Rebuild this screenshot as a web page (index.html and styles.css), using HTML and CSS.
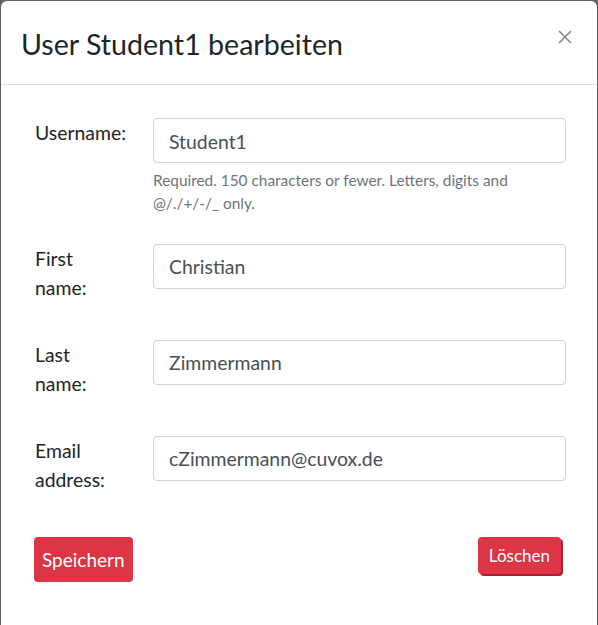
FILE: index.html
```html
<!DOCTYPE html>
<html lang="de">
<head>
<meta charset="utf-8">
<title>User Student1 bearbeiten</title>
<link rel="stylesheet" href="styles.css">
</head>
<body>
<div class="modal">
  <div class="modal-header">
    <h4 class="modal-title">User Student1 bearbeiten</h4>
    <button class="close" type="button" aria-label="Close">
      <svg width="14" height="14" viewBox="0 0 14 14"><path d="M1 1 L13 13 M13 1 L1 13" stroke="#8a8a8a" stroke-width="1.7" fill="none"/></svg>
    </button>
  </div>
  <form class="modal-body">
    <div class="row row-first">
      <label class="lbl lbl-nowrap">Username:</label>
      <div class="field">
        <input class="input" type="text" value="Student1">
        <div class="help">Required. 150 characters or fewer. Letters, digits and @/./+/-/_ only.</div>
      </div>
    </div>
    <div class="row">
      <label class="lbl">First name:</label>
      <div class="field"><input class="input" type="text" value="Christian"></div>
    </div>
    <div class="row">
      <label class="lbl">Last name:</label>
      <div class="field"><input class="input" type="text" value="Zimmermann"></div>
    </div>
    <div class="row row-last">
      <label class="lbl">Email address:</label>
      <div class="field"><input class="input" type="text" value="cZimmermann@cuvox.de"></div>
    </div>
    <div class="actions">
      <button class="btn btn-save" type="button">Speichern</button>
      <button class="btn btn-del" type="button">Löschen</button>
    </div>
  </form>
</div>
</body>
</html>
```
FILE: styles.css
```css
html, body {
  margin: 0;
  height: 100%;
}
body {
  background: #626262;
  font-family: Lato, "Open Sans", sans-serif;
  color: #212529;
  overflow: hidden;
}
.modal {
  margin: 1px 0 0 1px;
  width: 596px;
  height: 624px;
  background: #fff;
  border-radius: 6px 6px 0 0;
  display: flex;
  flex-direction: column;
}
.modal-header {
  display: flex;
  justify-content: space-between;
  align-items: flex-start;
  padding: 26px 25px 0 20px;
  height: 57px;
  border-bottom: 1px solid #dee2e6;
}
.modal-title {
  margin: 0;
  font-size: 28.6px;
  font-weight: 400;
  line-height: 1.2;
  color: #212529;
}
.close {
  border: 0;
  background: none;
  padding: 0;
  margin-top: 3px;
  width: 14px;
  height: 14px;
  display: flex;
  cursor: pointer;
}
.modal-body {
  margin: 0;
  padding: 33px 31px 0 34px;
}
.row {
  display: flex;
  align-items: flex-start;
  margin-bottom: 38px;
}
.row-first {
  margin-bottom: 28px;
}
.row-last {
  margin-bottom: 43px;
}
.lbl {
  width: 80px;
  flex: none;
  margin-right: 38px;
  font-size: 19.4px;
  line-height: 29.1px;
  color: #212529;
}
.lbl-nowrap {
  white-space: nowrap;
}
.field {
  flex: 1;
}
.input {
  display: block;
  box-sizing: border-box;
  width: 100%;
  height: 45px;
  margin: 0;
  padding: 1px 15px 0;
  border: 1px solid #ced4da;
  border-radius: 4px;
  font-family: Lato, "Open Sans", sans-serif;
  font-size: 19.4px;
  color: #495057;
  background: #fff;
  outline: none;
}
.help {
  margin-top: 6px;
  font-size: 15.4px;
  line-height: 23.3px;
  color: #6c757d;
}
.actions {
  display: flex;
  justify-content: space-between;
  align-items: flex-start;
  margin-left: -1px;
  padding-right: 5px;
}
.btn {
  border: 0;
  color: #fff;
  background: #dc3545;
  font-family: Lato, "Open Sans", sans-serif;
  border-radius: 4px;
  cursor: pointer;
}
.btn-save {
  height: 45px;
  padding: 0 8px;
  font-size: 19px;
}
.btn-del {
  height: 37px;
  padding: 0 11px;
  font-size: 17px;
  box-shadow: 2px 2px 0 #a82230;
}
```
